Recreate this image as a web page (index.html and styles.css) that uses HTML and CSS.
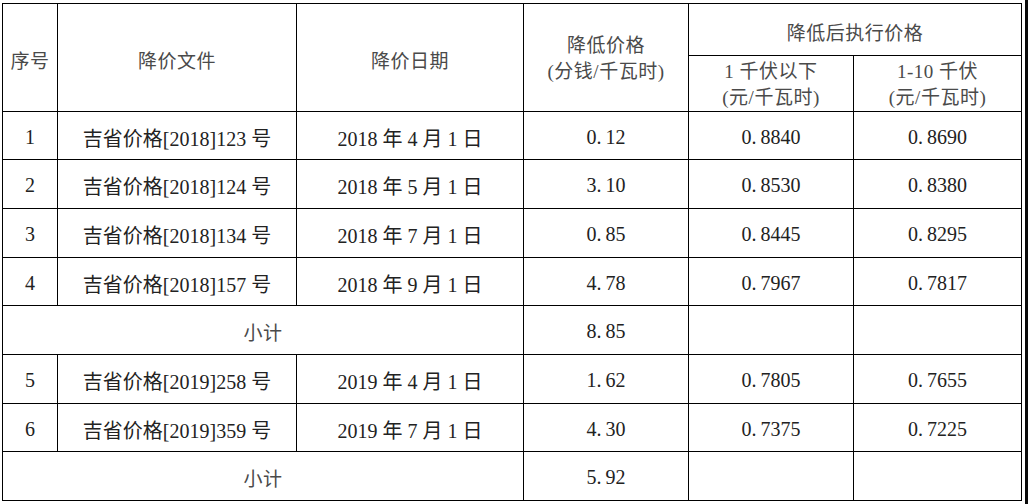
FILE: index.html
```html
<!DOCTYPE html>
<html lang="zh">
<head>
<meta charset="utf-8">
<link rel="stylesheet" href="styles.css">
</head>
<body>
<div class="page">
<table class="price">
  <colgroup>
    <col class="c1"><col class="c2"><col class="c3"><col class="c4"><col class="c5"><col class="c6">
  </colgroup>
  <tr class="h1">
    <td rowspan="2" class="cn">序号</td>
    <td rowspan="2" class="cn">降价文件</td>
    <td rowspan="2" class="cn">降价日期</td>
    <td rowspan="2" class="cn two">降低价格<br>(分钱/千瓦时)</td>
    <td colspan="2" class="cn">降低后执行价格</td>
  </tr>
  <tr class="h2">
    <td class="cn two">1 千伏以下<br>(元/千瓦时)</td>
    <td class="cn two">1-10 千伏<br>(元/千瓦时)</td>
  </tr>
  <tr class="r48">
    <td>1</td><td>吉省价格[2018]123 号</td><td>2018 年 4 月 1 日</td><td>0<span class="dot">.</span>12</td><td>0<span class="dot">.</span>8840</td><td>0<span class="dot">.</span>8690</td>
  </tr>
  <tr class="r49">
    <td>2</td><td>吉省价格[2018]124 号</td><td>2018 年 5 月 1 日</td><td>3<span class="dot">.</span>10</td><td>0<span class="dot">.</span>8530</td><td>0<span class="dot">.</span>8380</td>
  </tr>
  <tr class="r49">
    <td>3</td><td>吉省价格[2018]134 号</td><td>2018 年 7 月 1 日</td><td>0<span class="dot">.</span>85</td><td>0<span class="dot">.</span>8445</td><td>0<span class="dot">.</span>8295</td>
  </tr>
  <tr class="r48">
    <td>4</td><td>吉省价格[2018]157 号</td><td>2018 年 9 月 1 日</td><td>4<span class="dot">.</span>78</td><td>0<span class="dot">.</span>7967</td><td>0<span class="dot">.</span>7817</td>
  </tr>
  <tr class="r49">
    <td colspan="3" class="cn">小计</td><td>8<span class="dot">.</span>85</td><td></td><td></td>
  </tr>
  <tr class="r49">
    <td>5</td><td>吉省价格[2019]258 号</td><td>2019 年 4 月 1 日</td><td>1<span class="dot">.</span>62</td><td>0<span class="dot">.</span>7805</td><td>0<span class="dot">.</span>7655</td>
  </tr>
  <tr class="r48">
    <td>6</td><td>吉省价格[2019]359 号</td><td>2019 年 7 月 1 日</td><td>4<span class="dot">.</span>30</td><td>0<span class="dot">.</span>7375</td><td>0<span class="dot">.</span>7225</td>
  </tr>
  <tr class="r49">
    <td colspan="3" class="cn">小计</td><td>5<span class="dot">.</span>92</td><td></td><td></td>
  </tr>
</table>
<div class="edge"></div>
</div>
</body>
</html>
```
FILE: styles.css
```css
html, body {
  margin: 0;
  padding: 0;
  background: #fff;
}
.page {
  display: flex;
  align-items: flex-start;
  width: 1028px;
  height: 504px;
  overflow: hidden;
}
.price {
  border-collapse: collapse;
  table-layout: fixed;
  width: 1020px;
  margin: 3px 0 0 2px;
  font-family: "Liberation Serif", "Noto Sans CJK SC", serif;
  font-size: 20px;
  color: #222;
}
.c1 { width: 55px; }
.c2 { width: 239px; }
.c3 { width: 227px; }
.c4 { width: 165px; }
.c5 { width: 165px; }
.c6 { width: 168px; }
.price td {
  border: 1px solid #000;
  text-align: center;
  vertical-align: middle;
  padding: 3px 0 0 0;
  white-space: nowrap;
}
.price .cn {
  color: #4a4a4a;
  font-size: 19px;
  letter-spacing: 0.5px;
}
.price .two {
  line-height: 26px;
}
.dot {
  margin-right: 4px;
}
.h1 { height: 52px; }
.h2 { height: 54px; }
.r48 { height: 48px; }
.r49 { height: 49px; }
.edge {
  margin-left: auto;
  width: 3px;
  height: 100%;
  background: #0a0a0a;
}
```
